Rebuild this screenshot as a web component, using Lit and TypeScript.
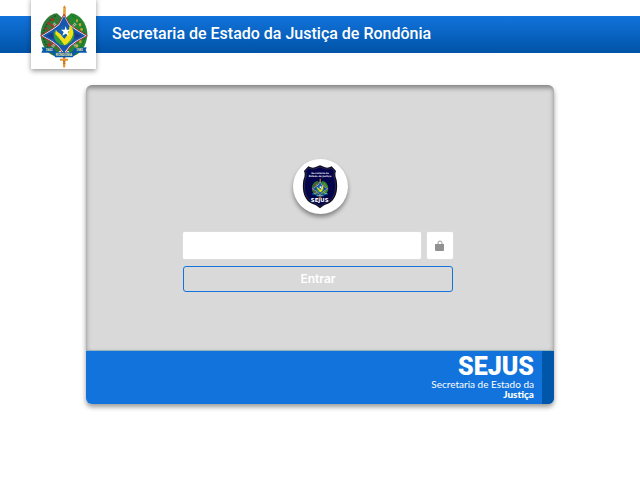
import { LitElement, html, css, svg } from "lit";
import { customElement } from "lit/decorators.js";

/* State coat of arms, shared by the header and the badge. */
const arms = svg`
  <g>
    <path d="M108 40 C82 42 62 68 59 98 C58 126 72 158 100 168 L130 140 V60Z" fill="#2d7a35"/>
    <path d="M150 40 C176 42 196 68 199 98 C200 126 186 158 158 168 L128 140 V60Z" fill="#26852f"/>
    <path d="M104 47 Q70 70 66 108 Q72 138 96 158" fill="none" stroke="#134f24" stroke-width="4" stroke-dasharray="5 4"/>
    <path d="M154 47 Q188 70 192 108 Q186 138 162 158" fill="none" stroke="#0e6425" stroke-width="3" stroke-dasharray="5 4"/>
    <g fill="#a3342b">
      <circle cx="94" cy="58" r="5"/><circle cx="83" cy="70" r="5"/><circle cx="94" cy="76" r="5"/>
      <circle cx="76" cy="86" r="4"/><circle cx="85" cy="134" r="6"/><circle cx="97" cy="132" r="5"/>
      <circle cx="92" cy="60" r="3"/>
    </g>
    <g fill="#c9a536">
      <ellipse cx="168" cy="62" rx="3" ry="5"/><ellipse cx="177" cy="74" rx="4" ry="5"/>
      <ellipse cx="182" cy="88" rx="4" ry="5"/><ellipse cx="178" cy="125" rx="4" ry="5"/>
      <ellipse cx="168" cy="138" rx="4" ry="5"/>
    </g>
    <path d="M98 70 L110 84 M152 84 L164 70 M94 140 L108 124 M152 124 L166 140" stroke="#b9c2b5" stroke-width="9" stroke-dasharray="3 2"/>
    <path d="M127 22 L130 16 L134 22 V48 H126Z" fill="#d88c20"/>
    <path d="M129 24V46" stroke="#ffcf55" stroke-width="2"/>
    <path d="M129 43 L146 73 L166 87 L199 107 L166 126 L147 141 L129 166 L112 141 L92 126 L59 107 L92 87 L112 73Z" fill="#e8eef6" stroke="#b52c34" stroke-width="3"/>
    <path d="M129 48 L144 76 L164 90 L193 107 L164 123 L145 138 L129 159 L113 138 L94 123 L65 107 L94 90 L114 76Z" fill="#1657ad"/>
    <path d="M76 107 L97 97 L97 117Z M182 107 L161 97 L161 117Z" fill="#1b3d88"/>
    <circle cx="130" cy="105" r="29" fill="#1757ad"/>
    <path d="M98 94 Q115 102 128 119 Q144 110 154 82 Q166 106 152 125 Q129 146 107 127 Q97 115 98 94Z" fill="#329b3e"/>
    <path d="M104 89 Q120 100 130 116 Q143 103 146 76 Q159 86 156 104 Q149 126 130 136 Q116 114 103 103Z" fill="#f3df19"/>
    <path d="M107 88 Q113 80 122 78 L144 81 Q145 102 130 116 Q122 102 107 94Z" fill="#1261b5"/>
    <path d="M134 78 L137 89 L148 89 L140 96 L144 107 L134 101 L124 107 L128 96 L120 89 L131 89Z" fill="#fff"/>
    <path d="M126 157 H133 V176 H126Z" fill="#b65222"/>
    <path d="M62 142 L98 144 L106 157 H152 L161 144 L197 142 L194 150 L198 158 L166 158 L155 172 H103 L93 158 L61 158 L65 150Z" fill="#0758aa"/>
    <g fill="#fff09a" font-family="Liberation Sans, sans-serif" font-weight="700" font-size="9" text-anchor="middle">
      <text x="84" y="154">1943</text><text x="176" y="154">1981</text>
      <text x="129" y="167">RONDÔNIA</text>
    </g>
    <path d="M117 176 H141 V182 H117Z M126 181 H133 V199 L129 205 L126 199Z" fill="#e6972d"/>
    <path d="M126 184H133M126 190H133" stroke="#9d4b22" stroke-width="2"/>
  </g>`;

@customElement("app-root")
export class AppRoot extends LitElement {
  static styles = css`
    :host {
      display: block;
      min-height: 100vh;
      background: #fff;
      font-family: Roboto, sans-serif;
      color: #fff;
    }
    * { box-sizing: border-box; }
    header {
      display: flex;
      align-items: center;
      gap: 16px;
      height: 37px;
      margin-top: 16px;
      padding: 0 31px 2px;
      background: linear-gradient(#1273dc, #0053a6);
    }
    .crest {
      display: flex;
      justify-content: center;
      align-items: flex-end;
      flex: none;
      width: 65px;
      height: 71px;
      background: #fff;
      box-shadow: 0 2px 5px rgba(0, 0, 0, 0.4);
    }
    .crest svg { width: 48px; height: 64px; }
    h1 { margin: 0; font-size: 16px; line-height: 20px; font-weight: 500; }
    .card {
      width: calc(100% - 32px);
      max-width: 468px;
      margin: 32px auto 0;
      border-radius: 6px;
      overflow: hidden;
      background: #d9d9d9;
      box-shadow: 0 3px 5px rgba(0, 0, 0, 0.4);
    }
    .body {
      display: flex;
      flex-direction: column;
      align-items: center;
      gap: 18px;
      padding: 74px 16px 58px;
      border-bottom: 1px solid #94b4c0;
      box-shadow: inset 0 3px 5px rgba(0, 0, 0, 0.4);
    }
    .badge {
      display: grid;
      place-items: center;
      width: 55px;
      height: 55px;
      border-radius: 50%;
      background: #fff;
      box-shadow: 0 3px 4px rgba(0, 0, 0, 0.4);
    }
    .badge svg { width: 36px; height: 44px; }
    form {
      display: flex;
      flex-direction: column;
      gap: 7px;
      width: 100%;
      max-width: 274px;
      padding-right: 4px;
    }
    .field { display: flex; gap: 6px; }
    input {
      flex: 1;
      min-width: 0;
      height: 27px;
      padding: 0 8px;
      border: 0;
      border-radius: 2px;
      background: #fff;
      box-shadow: 0 0 1px #fff;
      font: 13px Roboto, sans-serif;
    }
    .lock {
      display: grid;
      place-items: center;
      width: 26px;
      height: 27px;
      border-radius: 2px;
      background: #fff;
      box-shadow: 0 0 1px #fff;
    }
    .lock svg { width: 10px; height: 11px; }
    button {
      height: 26px;
      padding: 0;
      border: 1px solid #1273dc;
      border-radius: 3px;
      background: transparent;
      color: #fff;
      font: 600 12px/24px Inter, sans-serif;
    }
    footer {
      display: flex;
      flex-direction: column;
      align-items: flex-end;
      height: 53px;
      padding: 4px 8px 0 0;
      border-right: 12px solid #0056a8;
      background: #1273dc;
      font-family: Lato, sans-serif;
      font-size: 10px;
      line-height: 10px;
    }
    .brand { font: 900 25px/24px Roboto, sans-serif; }
    .strong { font-weight: 900; }
  `;

  render() {
    return html`
      <header>
        <div class="crest">
          <svg viewBox="57 15 144 192" role="img" aria-label="Brasão de Rondônia">${arms}</svg>
        </div>
        <h1>Secretaria de Estado da Justiça de Rondônia</h1>
      </header>
      <main class="card">
        <div class="body">
          <div class="badge">
            <svg viewBox="0 0 108 132" role="img" aria-label="SEJUS">
              <path d="M19 4 Q30 10 39 7 L54 1 L69 7 Q78 10 89 4 L102 18 Q97 30 104 46 C109 78 101 103 81 115 Q65 119 54 130 Q43 119 27 115 C7 103 -1 78 4 46 Q11 30 6 18Z" fill="#0c0b20"/>
              <path d="M20 9 Q31 15 40 11 L54 6 L68 11 Q77 15 88 9 L97 19 Q92 31 99 47 C104 77 96 99 78 111 Q63 115 54 124 Q45 115 30 111 C12 99 4 77 9 47 Q16 31 11 19Z" fill="#04044c" stroke="#65657f" stroke-width="1"/>
              <g fill="#fff" font-family="DejaVu Sans, sans-serif" font-weight="700" text-anchor="middle">
                <text x="54" y="28" font-size="7">Secretaria de</text>
                <text x="54" y="37" font-size="7">Estado da Justiça</text>
                <text x="53" y="110" font-size="16">SEJUS</text>
              </g>
              <g transform="translate(9 34) scale(.35)">${arms}</g>
            </svg>
          </div>
          <form @submit=${(e: Event) => e.preventDefault()}>
            <div class="field">
              <input id="user" type="text" aria-label="Usuário" />
              <label class="lock" for="user">
                <svg viewBox="0 0 10 11" aria-hidden="true">
                  <path d="M3 4 V3 A2 2 0 0 1 7 3 V4" fill="none" stroke="#999" stroke-width="1"/>
                  <path d="M0 4H9V10Q9 11 8 11H1Q0 11 0 10Z" fill="#919191"/>
                </svg>
              </label>
            </div>
            <button type="submit">Entrar</button>
          </form>
        </div>
        <footer>
          <span class="brand">SEJUS</span>
          <span>Secretaria de Estado da</span>
          <span class="strong">Justiça</span>
        </footer>
      </main>
    `;
  }
}
